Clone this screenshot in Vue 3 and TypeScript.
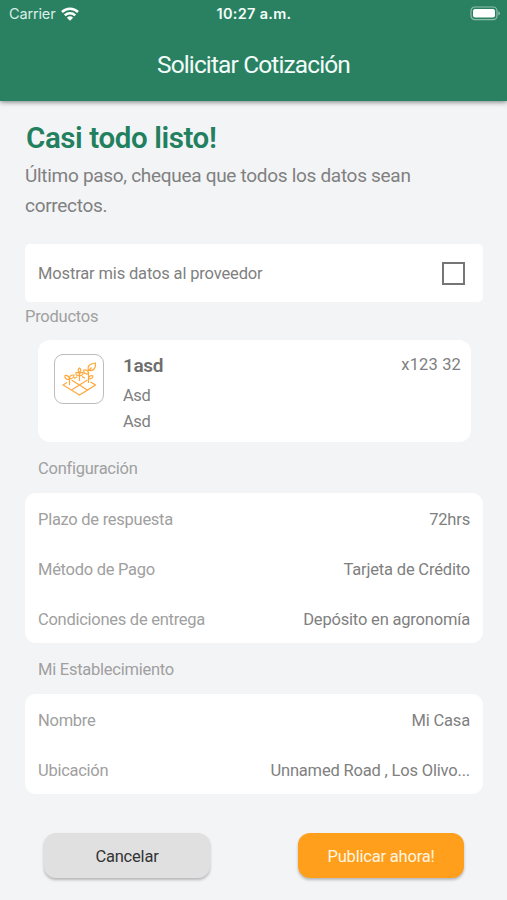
<script setup lang="ts">
interface Row {
  label: string
  value: string
}

const settings: Row[] = [
  { label: 'Plazo de respuesta', value: '72hrs' },
  { label: 'Método de Pago', value: 'Tarjeta de Crédito' },
  { label: 'Condiciones de entrega', value: 'Depósito en agronomía' },
]

const place: Row[] = [
  { label: 'Nombre', value: 'Mi Casa' },
  { label: 'Ubicación', value: 'Unnamed Road , Los Olivo...' },
]
</script>

<template>
  <div class="screen">
    <header class="header">
      <div class="status">
        <div class="carrier">
          <span>Carrier</span>
          <svg class="wifi" width="18" height="14" viewBox="0 0 18 14">
            <path d="M1 5a11.300 11.300 0 0 1 16 0" />
            <path d="M3.800 8.300a7.400 7.400 0 0 1 10.400 0" />
            <path class="dot" d="M9 13.800 5.900 10.700a4.500 4.500 0 0 1 6.200 0z" />
          </svg>
        </div>
        <span class="clock">10:27 a.m.</span>
        <svg class="battery" width="31" height="15" viewBox="0 0 31 15">
          <rect class="shell" x="1" y="1" width="26" height="12.6" rx="3.8" />
          <rect class="charge" x="3" y="3" width="22" height="8.6" rx="2" />
          <path class="tip" d="M28.3 5.2q1.7.7 1.7 2.1t-1.7 2.1z" />
        </svg>
      </div>
      <h1 class="title">Solicitar Cotización</h1>
    </header>

    <main class="content">
      <h2 class="heading">Casi todo listo!</h2>
      <p class="intro">Último paso, chequea que todos los datos sean<br />correctos.</p>

      <label class="consent">
        <span>Mostrar mis datos al proveedor</span>
        <span class="checkbox"></span>
      </label>

      <h3 class="section flush">Productos</h3>
      <article class="product">
        <div class="thumb">
          <svg width="34" height="36" viewBox="0 0 34 36">
            <path d="M5 21.500 1 24l16.500 10L33.500 24l-5-3M9.500 19l15.800 10M9.500 29 25.500 19M12 17.500l3-1.800M20 15.500l3 1.800" />
            <path d="M7.500 24v-8M7.500 18.500c-3.500 0-5-1.500-4.500-4 3-.3 4.500 1.500 4.500 4zM7.500 17.500c0-3 2-4 4.500-3.300 0 2.300-1.500 3.800-4.500 3.300z" />
            <path d="M17.500 20v-9M17.500 14.500c-3 .5-4-1-3.500-3 2-.5 3.500.5 3.500 3zM17.500 11.500c-2-2-1.500-3.500 0-4.500 1.500 1 2 2.500 0 4.500zM17.500 14.500c0-2.500 1.500-3.500 3.500-3 .2 2-1 3.500-3.500 3z" />
            <path d="M26.500 22V11M26.500 13c-4 .3-5.500-1.500-4.500-4 3-.4 4.500 1.500 4.500 4zM26.500 17.500c.5-2.500 2.500-3.500 4.500-2.500-.3 2.500-2 3.300-4.500 2.500zM26.500 9.500c-1.500-4.500 1.500-7 7-7.500.5 5-2 8.500-7 7.500zM26.500 10l3-3.500" />
          </svg>
        </div>
        <div class="details">
          <strong>1asd</strong>
          <span>Asd</span>
          <span>Asd</span>
        </div>
        <span class="quantity">x123 32</span>
      </article>

      <h3 class="section">Configuración</h3>
      <dl class="list">
        <div v-for="row in settings" :key="row.label" class="row">
          <dt>{{ row.label }}</dt>
          <dd>{{ row.value }}</dd>
        </div>
      </dl>

      <h3 class="section">Mi Establecimiento</h3>
      <dl class="list">
        <div v-for="row in place" :key="row.label" class="row">
          <dt>{{ row.label }}</dt>
          <dd>{{ row.value }}</dd>
        </div>
      </dl>

      <div class="actions">
        <button type="button" class="button cancel">Cancelar</button>
        <button type="button" class="button publish">Publicar ahora!</button>
      </div>
    </main>
  </div>
</template>

<style>
body {
  margin: 0;
  background: #f3f4f6;
}
</style>

<style scoped>
.screen {
  width: 507px;
  height: 900px;
  overflow: hidden;
  box-sizing: border-box;
  background: #f3f4f6;
  color: #808080;
  font-family: Roboto, "Noto Sans", sans-serif;
  font-size: 16.5px;
  letter-spacing: -0.15px;
}

h1, h2, h3, p, dl, dd {
  margin: 0;
  font-weight: 400;
}

.header {
  height: 101px;
  background: #2a8162;
  color: #f2fcf8;
  box-shadow: 0 1px 5px rgba(0, 0, 0, 0.5);
}

.status {
  display: grid;
  grid-template-columns: 1fr auto 1fr;
  align-items: center;
  height: 27px;
  padding: 0 6px 0 9px;
  font-family: Inter, sans-serif;
  font-size: 14.5px;
}

.carrier {
  display: flex;
  align-items: center;
  gap: 6px;
  color: #d9efe6;
}

.wifi {
  fill: none;
  stroke: #fff;
  stroke-width: 2.5;
}

.wifi .dot {
  fill: #fff;
  stroke: none;
}

.clock {
  margin-right: 2px;
  font-weight: 600;
  letter-spacing: 0.3px;
}

.battery {
  justify-self: end;
}

.shell {
  fill: none;
  stroke: #8fbdac;
  stroke-width: 1.2;
}

.charge {
  fill: #fff;
}

.tip {
  fill: #8fbdac;
}

.title {
  padding-top: 21px;
  font-size: 24.5px;
  line-height: 34px;
  letter-spacing: -0.88px;
  text-align: center;
}

.content {
  padding: 18px 24px 0 25px;
}

.heading {
  padding-left: 1px;
  color: #22805f;
  font-size: 29.5px;
  font-weight: 600;
  line-height: 38px;
  letter-spacing: -0.4px;
}

.intro {
  margin-top: 4px;
  font-size: 19px;
  line-height: 29.5px;
  letter-spacing: -0.3px;
}

.consent {
  display: flex;
  align-items: center;
  justify-content: space-between;
  height: 58px;
  margin-top: 24px;
  padding: 0 18px 0 13px;
  box-sizing: border-box;
  border-radius: 5px;
  background: #fff;
}

.checkbox {
  width: 23px;
  height: 23px;
  box-sizing: border-box;
  border: 2.5px solid #757575;
}

.section {
  height: 51px;
  padding-left: 13px;
  color: #a0a0a0;
  font-size: 16.5px;
  line-height: 53px;
  letter-spacing: -0.25px;
}

.section.flush {
  height: 38px;
  padding-left: 0;
  line-height: 29px;
}

.product {
  display: flex;
  align-items: flex-start;
  height: 102px;
  margin: 0 12px 0 13px;
  padding: 14px 10px 0 16px;
  box-sizing: border-box;
  border-radius: 12px;
  background: #fff;
}

.thumb {
  display: flex;
  align-items: center;
  justify-content: center;
  width: 50px;
  height: 50px;
  box-sizing: border-box;
  border: 1px solid #bdbdbd;
  border-radius: 9px;
}

.thumb svg {
  fill: none;
  stroke: #ffa83d;
  stroke-width: 1.2;
}

.details {
  display: flex;
  flex: 1;
  flex-direction: column;
  margin-left: 19px;
  line-height: 26px;
  letter-spacing: -0.4px;
}

.details strong {
  height: 29px;
  color: #6e6e6e;
  font-size: 19px;
  font-weight: 600;
  line-height: 23px;
}

.quantity {
  line-height: 21px;
  letter-spacing: 0.15px;
}

.list {
  border-radius: 11px;
  background: #fff;
  letter-spacing: -0.18px;
}

.row {
  display: flex;
  align-items: center;
  justify-content: space-between;
  height: 50px;
  padding: 2px 13px 0;
  box-sizing: border-box;
}

.row dt {
  color: #a0a0a0;
  letter-spacing: -0.27px;
}

.actions {
  display: flex;
  justify-content: space-between;
  margin: 39px 19px 0;
}

.button {
  width: 166px;
  height: 45px;
  padding: 2px 0 0;
  border: 0;
  border-radius: 12px;
  font: inherit;
  letter-spacing: -0.2px;
  box-shadow: 0 2px 3px rgba(0, 0, 0, 0.25);
}

.cancel {
  background: #e0e0e0;
  color: #333;
}

.publish {
  background: #ff9f1c;
  color: #fff6e2;
}
</style>
